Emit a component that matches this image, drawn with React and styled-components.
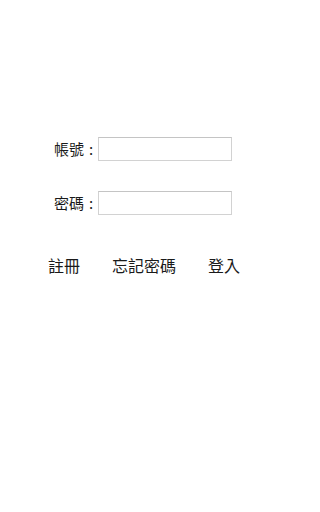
import React from "react";
import styled, { createGlobalStyle } from "styled-components";

const Global = createGlobalStyle`
  html, body {
    margin: 0;
    padding: 0;
    background: #fff;
  }
  body {
    font-family: "Noto Sans CJK TC", "Noto Sans", sans-serif;
    color: #1a1a1a;
  }
`;

const Page = styled.div`
  width: 288px;
  height: 512px;
  padding-top: 137px;
  box-sizing: border-box;
`;

const Form = styled.div`
  display: flex;
  flex-direction: column;
  gap: 30px;
  padding-left: 54px;
`;

const Row = styled.div`
  display: flex;
  align-items: center;
  height: 24px;
`;

const Label = styled.label`
  font-size: 15px;
  line-height: 24px;
  white-space: nowrap;
`;

const Colon = styled.span`
  width: 14px;
  font-size: 15px;
  line-height: 24px;
  text-align: center;
`;

const Input = styled.input`
  width: 134px;
  height: 24px;
  box-sizing: border-box;
  border: 1px solid #d2d2d2;
  border-top-color: #c4c4c4;
  padding: 0 4px;
  font-size: 14px;
  outline: none;
  background: #fff;
`;

const Actions = styled.div`
  display: flex;
  justify-content: center;
  margin-top: 38px;
`;

const Action = styled.button`
  width: 80px;
  height: 24px;
  padding: 0;
  border: none;
  background: none;
  font-family: "Noto Sans CJK TC", "Noto Sans", sans-serif;
  font-size: 16px;
  line-height: 24px;
  color: #1a1a1a;
  cursor: pointer;
`;

const App = () => {
  return (
    <>
      <Global />
      <Page>
        <Form>
          <Row>
            <Label>帳號</Label>
            <Colon>:</Colon>
            <Input type="text" />
          </Row>
          <Row>
            <Label>密碼</Label>
            <Colon>:</Colon>
            <Input type="password" />
          </Row>
        </Form>
        <Actions>
          <Action>註冊</Action>
          <Action>忘記密碼</Action>
          <Action>登入</Action>
        </Actions>
      </Page>
    </>
  );
};

export default App;
